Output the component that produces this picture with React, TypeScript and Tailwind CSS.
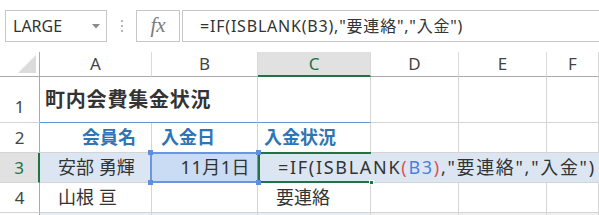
import React from "react";

// shared cell look: thin grey grid line on the right and bottom
const cell = "flex items-center border-r border-b border-[#d4d4d4] whitespace-nowrap";
const rowHead =
  "flex items-center justify-center border-r border-b border-r-[#ababab] border-b-[#d4d4d4] text-[17px] text-[#444]";
const colHead =
  "flex items-center justify-center border-r border-b border-r-[#dadada] border-b-[#ababab] text-[17px] text-[#444]";

function Handle({ className }: { className: string }) {
  return <div className={`absolute z-30 h-[5px] w-[5px] bg-[#5b8fe0] ${className}`} />;
}

export default function App() {
  return (
    <div className="h-[215px] w-[599px] overflow-hidden bg-white text-[#333] font-['Noto_Sans','Noto_Sans_CJK_JP',sans-serif]">
      {/* name box + formula bar */}
      <div className="flex h-[52px] items-start pt-[10px]">
        <div className="ml-[5px] flex h-[32px] w-[102px] shrink-0 items-center justify-between border border-[#c6c6c6] pl-[7px] pr-[6px]">
          <span className="text-[16px] leading-none">LARGE</span>
          <svg width="8" height="5" viewBox="0 0 8 5">
            <path d="M0 0h8L4 4.5z" fill="#8a8a8a" />
          </svg>
        </div>
        <div className="ml-[14px] flex h-[32px] shrink-0 flex-col items-center justify-center gap-[3px]">
          <span className="h-[2px] w-[2px] bg-[#b5b5b5]" />
          <span className="h-[2px] w-[2px] bg-[#b5b5b5]" />
          <span className="h-[2px] w-[2px] bg-[#b5b5b5]" />
        </div>
        <div className="ml-[13px] flex h-[32px] w-[44px] shrink-0 items-center justify-center border border-[#c6c6c6] font-['Liberation_Serif',serif] text-[21px] italic text-[#7a7a7a]">
          fx
        </div>
        <div className="-mr-[20px] ml-[2px] flex h-[32px] flex-1 items-center whitespace-nowrap border border-[#c6c6c6] pl-[17px] text-[16px] tracking-[0.8px]">
          =IF(ISBLANK(B3),"要連絡","入金")
        </div>
      </div>

      {/* sheet */}
      <div className="grid grid-cols-[40px_112px_106px_113px_88px_88px_52px] grid-rows-[25px_46px_30px_30px_30px_20px] text-[18px]">
        {/* column headers */}
        <div className="flex items-end justify-end border-r border-b border-[#ababab] pb-[3px] pr-[3px]">
          <svg width="18" height="18" viewBox="0 0 18 18">
            <path d="M18 0V18H0z" fill="#dcdcdc" />
          </svg>
        </div>
        <div className={colHead}>A</div>
        <div className={colHead}>B</div>
        <div className="flex items-center justify-center border-r border-b-2 border-r-[#dadada] border-b-[#217346] bg-[#e1e1e1] text-[17px] text-[#217346]">
          C
        </div>
        <div className={colHead}>D</div>
        <div className={colHead}>E</div>
        <div className={colHead}>F</div>

        {/* row 1 */}
        <div className="flex items-end justify-center border-r border-b border-r-[#ababab] border-b-[#d4d4d4] pb-[3px] text-[17px] text-[#444]">
          1
        </div>
        <div className="col-span-2 flex items-center border-r border-b border-r-[#d4d4d4] border-b-[#5b9bd5] pl-[5px] text-[20px] font-bold tracking-[0.8px]">
          町内会費集金状況
        </div>
        <div className="border-r border-b border-r-[#d4d4d4] border-b-[#5b9bd5]" />
        <div className={cell} />
        <div className={cell} />
        <div className={cell} />

        {/* row 2 */}
        <div className={rowHead}>2</div>
        <div className={`${cell} justify-end pr-[15px] font-bold text-[#2e75b6]`}>会員名</div>
        <div className={`${cell} pl-[9px] font-bold text-[#2e75b6]`}>入金日</div>
        <div className={`${cell} pl-[6px] font-bold text-[#2e75b6]`}>入金状況</div>
        <div className={cell} />
        <div className={cell} />
        <div className={cell} />

        {/* row 3 — active row */}
        <div className="flex items-center justify-center border-r-2 border-b border-r-[#217346] border-b-[#d4d4d4] bg-[#e1e1e1] text-[17px] text-[#217346]">
          3
        </div>
        <div className="flex items-center whitespace-nowrap border-r border-b border-[#d4d4d4] bg-[#dce6f2] pl-[18px]">
          安部 勇輝
        </div>
        <div className="relative flex items-center justify-end border-b border-[#d4d4d4] bg-[#c9dcf3] pr-[8px] tracking-[0.5px]">
          11月1日
          <div className="absolute -top-px -left-[2px] -right-px -bottom-px z-20 border-2 border-[#6b95e4]" />
          <Handle className="-top-[3px] -left-[4px]" />
          <Handle className="-top-[3px] -right-[3px]" />
          <Handle className="-bottom-[3px] -left-[4px]" />
          <Handle className="-bottom-[3px] -right-[3px]" />
        </div>
        <div className="relative flex items-center border-b border-[#d4d4d4] bg-[#dce6f2] pl-[20px]">
          <span className="relative z-10 whitespace-nowrap tracking-[1.7px]">
            =IF(ISBLANK<span className="text-[#e0505a]">(</span>
            <span className="text-[#4a7fe0]">B3</span>
            <span className="text-[#e0505a]">)</span>,"要連絡","入金")
          </span>
          <div className="absolute -top-px left-0 right-0 z-20 h-[2px] bg-[#217346]" />
          <div className="absolute -bottom-px left-0 right-0 z-20 h-[2px] bg-[#217346]" />
          <div className="absolute -top-px -bottom-px left-0 z-20 w-[2px] bg-[#217346]" />
          <div className="absolute -bottom-[3px] -right-[3px] z-30 h-[5px] w-[5px] border border-white bg-[#217346]" />
        </div>
        <div className="border-b border-[#d4d4d4] bg-[#dce6f2]" />
        <div className="border-b border-[#d4d4d4] bg-[#dce6f2]" />
        <div className="border-b border-[#d4d4d4] bg-[#dce6f2]" />

        {/* row 4 */}
        <div className={rowHead}>4</div>
        <div className={`${cell} pl-[18px]`}>山根 亘</div>
        <div className={cell} />
        <div className={`${cell} pl-[18px]`}>要連絡</div>
        <div className={cell} />
        <div className={cell} />
        <div className={cell} />

        {/* row 5 (cut off) */}
        <div className={rowHead} />
        <div className={`${cell} bg-[#e8eef6]`} />
        <div className={`${cell} bg-[#e8eef6]`} />
        <div className={`${cell} bg-[#e8eef6]`} />
        <div className={`${cell} bg-[#f0f0f0]`} />
        <div className={`${cell} bg-[#f0f0f0]`} />
        <div className={`${cell} bg-[#f0f0f0]`} />
      </div>
    </div>
  );
}
